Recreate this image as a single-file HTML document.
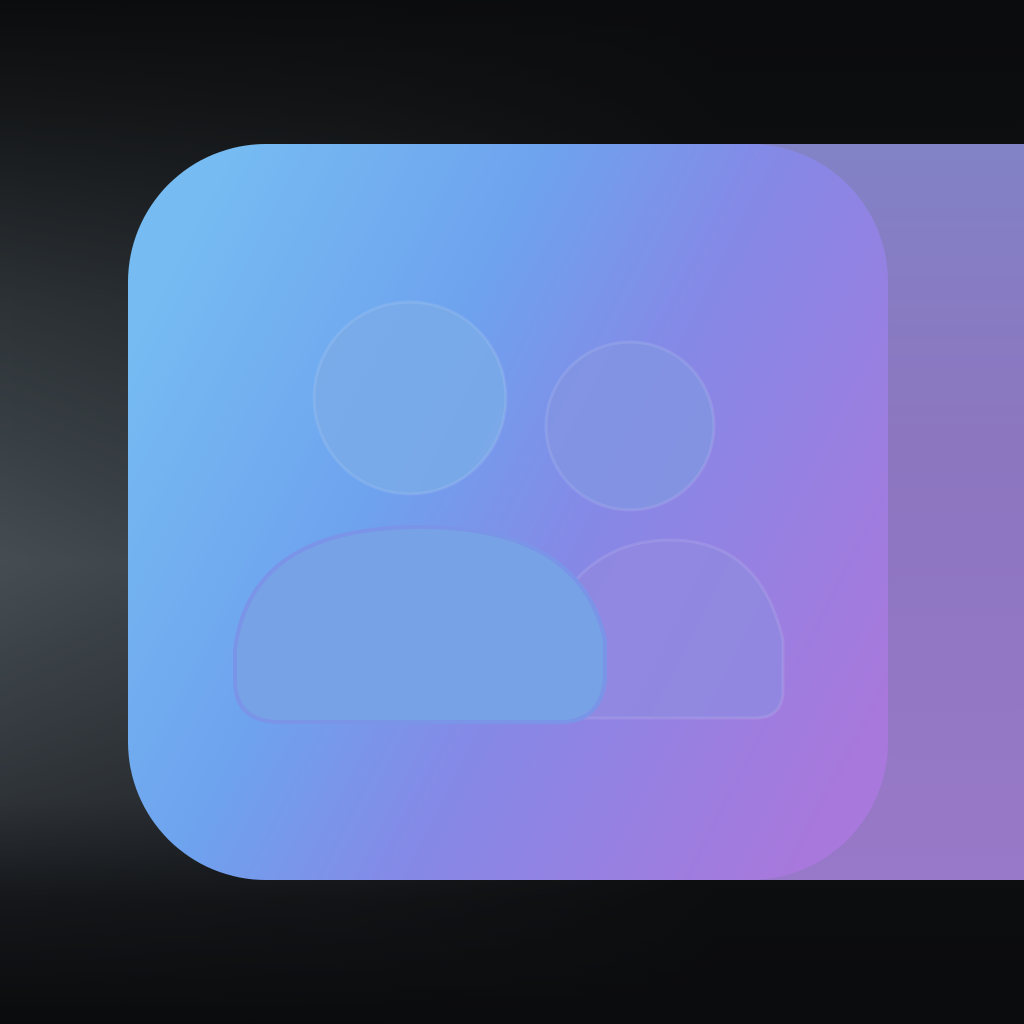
<!DOCTYPE html>
<html><head><style>
html,body{margin:0;padding:0;width:1024px;height:1024px;overflow:hidden;background:#0b0c0e}
</style></head><body>
<svg width="1024" height="1024" viewBox="0 0 1024 1024" xmlns="http://www.w3.org/2000/svg">
<defs>
<linearGradient id="bgv" x1="0" y1="0" x2="0" y2="1">
<stop offset="0" stop-color="#0b0c0d"/>
<stop offset="0.1" stop-color="#141618"/>
<stop offset="0.3" stop-color="#2c3236"/>
<stop offset="0.55" stop-color="#454d53"/>
<stop offset="0.78" stop-color="#2e3338"/>
<stop offset="0.88" stop-color="#141619"/>
<stop offset="1" stop-color="#0a0b0d"/>
</linearGradient>
<linearGradient id="hx" x1="0" y1="0" x2="1" y2="0">
<stop offset="0" stop-color="#0b0c0e" stop-opacity="0"/>
<stop offset="0.35" stop-color="#0b0c0e" stop-opacity="0.3"/>
<stop offset="0.7" stop-color="#0b0c0e" stop-opacity="0.9"/>
</linearGradient>
<linearGradient id="sq" x1="0" y1="0.25" x2="1" y2="0.75">
<stop offset="0" stop-color="#76bcf2"/>
<stop offset="0.35" stop-color="#6ea2ee"/>
<stop offset="0.6" stop-color="#8688e6"/>
<stop offset="1" stop-color="#a878dc"/>
</linearGradient>
<linearGradient id="rb" x1="0" y1="0" x2="0" y2="1">
<stop offset="0" stop-color="#8282c6"/>
<stop offset="0.4" stop-color="#8c76c0"/>
<stop offset="1" stop-color="#9878c8"/>
</linearGradient>
</defs>
<rect width="1024" height="1024" fill="url(#bgv)"/>
<rect width="1024" height="1024" fill="url(#hx)"/>
<rect x="740" y="144" width="284" height="736" fill="url(#rb)"/>
<rect x="128" y="144" width="760" height="736" rx="138" fill="url(#sq)"/>
<g stroke="#ffffff" stroke-opacity="0.1" stroke-width="3">
<circle cx="410" cy="398" r="96" fill="#7aaae8" fill-opacity="0.85"/>
<circle cx="630" cy="426" r="84" fill="#8294e2" fill-opacity="0.85"/>
<path d="M560 718 L560 600 Q600 540 670 540 Q760 540 783 640 L783 690 Q783 718 755 718 Z" fill="#9088e0" fill-opacity="0.9"/>
</g>
<path d="M280 722 Q235 722 235 680 L235 650 Q250 527 420 527 Q580 527 605 640 L605 680 Q600 722 560 722 Z" fill="#78a2e6" stroke="#7a94e8" stroke-width="4"/>
</svg>
</body></html>
